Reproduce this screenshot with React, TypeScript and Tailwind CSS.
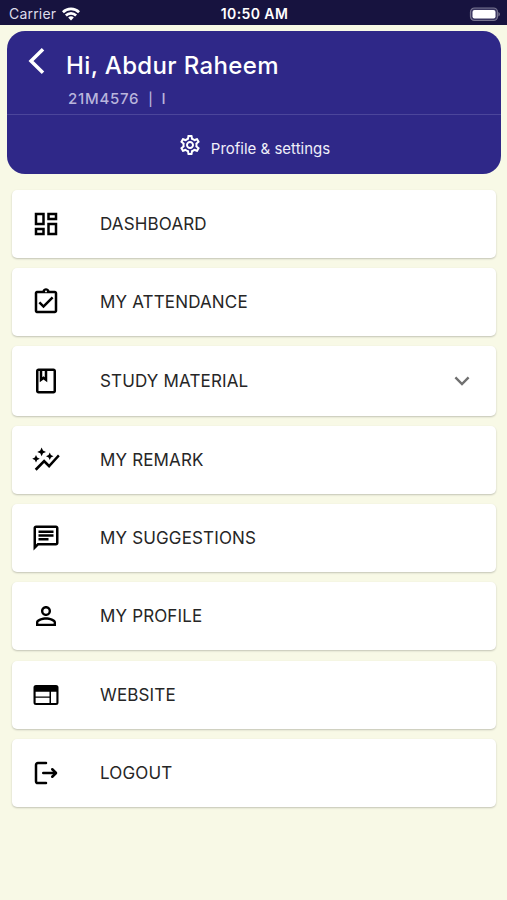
import type { ReactNode } from 'react';
import {
  MdOutlineAssignmentTurnedIn,
  MdOutlineAutoGraph,
  MdOutlineChat,
  MdOutlineClass,
  MdOutlineDashboard,
  MdOutlineSettings,
  MdPersonOutline,
} from 'react-icons/md';

interface MenuItem {
  label: string;
  icon: ReactNode;
  expandable?: boolean;
}

const ICON_SIZE = 30;

function WebsiteIcon() {
  return (
    <svg width={ICON_SIZE} height={ICON_SIZE} viewBox="0 0 24 24" fill="currentColor">
      <path
        fillRule="evenodd"
        d="M4 4h16a2 2 0 0 1 2 2v12a2 2 0 0 1-2 2H4a2 2 0 0 1-2-2V6a2 2 0 0 1 2-2zM3.7 9.3v3.8h11.1V9.3zM3.7 14.2v4.1h11.1v-4.1zM16 9.3v9h4.3v-9z"
      />
    </svg>
  );
}

function LogoutIcon() {
  return (
    <svg width={ICON_SIZE} height={ICON_SIZE} viewBox="0 0 24 24" fill="none" stroke="currentColor" strokeWidth={2}>
      <path d="M12 4H5.5A1.5 1.5 0 0 0 4 5.5v13A1.5 1.5 0 0 0 5.5 20H12" strokeLinecap="round" />
      <path d="M9.8 12h10" strokeLinecap="round" />
      <path d="M17 9l3 3-3 3" strokeLinecap="round" strokeLinejoin="round" />
    </svg>
  );
}

const menuItems: MenuItem[] = [
  { label: 'DASHBOARD', icon: <MdOutlineDashboard size={ICON_SIZE} /> },
  { label: 'MY ATTENDANCE', icon: <MdOutlineAssignmentTurnedIn size={ICON_SIZE} /> },
  { label: 'STUDY MATERIAL', icon: <MdOutlineClass size={ICON_SIZE} />, expandable: true },
  { label: 'MY REMARK', icon: <MdOutlineAutoGraph size={ICON_SIZE} /> },
  { label: 'MY SUGGESTIONS', icon: <MdOutlineChat size={ICON_SIZE} /> },
  { label: 'MY PROFILE', icon: <MdPersonOutline size={ICON_SIZE} /> },
  { label: 'WEBSITE', icon: <WebsiteIcon /> },
  { label: 'LOGOUT', icon: <LogoutIcon /> },
];

function StatusBar() {
  return (
    <div className="grid h-[25px] grid-cols-3 items-center bg-[#17133f] pl-[9px] pr-[7px] pt-[3px] text-[14px] leading-none text-white">
      <div className="flex items-center gap-[6px] text-[#dddcea]">
        <span className="tracking-[0.2px]">Carrier</span>
        <svg width="18" height="14" viewBox="0 0 19 14" fill="none" stroke="#fff" strokeWidth="2.8">
          <path d="M1 5.1a12 12 0 0 1 17 0" />
          <path d="M4.1 8.6a7.6 7.6 0 0 1 10.8 0" />
          <path d="M9.5 13.8l-3-3a4.3 4.3 0 0 1 6 0z" fill="#fff" stroke="none" />
        </svg>
      </div>
      <span className="whitespace-nowrap text-center text-[14px] font-semibold tracking-[0.4px]">10:50 AM</span>
      <svg className="justify-self-end" width="31" height="15" viewBox="0 0 31 15">
        <rect x="1.5" y="1" width="27" height="12.5" rx="4" fill="#3a3660" stroke="#77748f" strokeWidth="1.2" />
        <rect x="3.5" y="3" width="23" height="8.5" rx="2" fill="#fff" />
        <path d="M29.4 5c2 .8 2 3.7 0 4.5z" fill="#77748f" />
      </svg>
    </div>
  );
}

function ProfileHeader() {
  return (
    <header className="ml-[7px] mr-[6px] mt-[6px] h-[143px] rounded-[18px] bg-[#2f2888] text-white">
      <div className="flex h-[84px] border-b border-[#4c469b] pl-[20px]">
        <button className="mt-[15px] h-[29px] w-[39px] shrink-0" aria-label="Back">
          <svg width="20" height="29" viewBox="0 0 20 29" fill="none" stroke="currentColor" strokeWidth="3.5">
            <path d="M16 3.2 4 15l12 11.8" />
          </svg>
        </button>
        <div className="pt-[20px]">
          <h1 className="whitespace-nowrap text-[24px] font-medium leading-[30px] tracking-[0.36px]">Hi, Abdur Raheem</h1>
          <p className="ml-[2px] mt-[8px] flex items-center text-[15px] font-medium leading-[20px] tracking-[0.75px] text-[#b9b5dc]">
            <span>21M4576</span>
            <span className="ml-[9px] text-[13px]">|</span>
            <span className="ml-[8px]">I</span>
          </p>
        </div>
      </div>
      <button className="flex h-[59px] w-full items-center justify-center gap-[9px]">
        <MdOutlineSettings size={24} className="mt-px" />
        <span className="mt-[7px] text-[15px] leading-none text-[#f0effa]">Profile &amp; settings</span>
      </button>
    </header>
  );
}

function MenuRow({ item }: { item: MenuItem }) {
  return (
    <li
      className={`flex items-center rounded-[5px] bg-white pl-[19px] pr-[26px] shadow-[0_1px_2px_rgba(0,0,0,0.22)] ${
        item.expandable ? 'h-[70px]' : 'h-[68px]'
      }`}
    >
      <span className="text-black">{item.icon}</span>
      <span className="ml-[39px] grow pt-px text-[17px] leading-none tracking-[0.15px] text-[#262626]">{item.label}</span>
      {item.expandable && (
        <svg width="16" height="10" viewBox="0 0 16 10" fill="none" stroke="#707070" strokeWidth="2.4">
          <path d="M1.4 1.4 8 8l6.6-6.6" />
        </svg>
      )}
    </li>
  );
}

export default function App() {
  return (
    <div className="h-[900px] w-[507px] overflow-hidden bg-[#f8f9e6] font-['Inter',sans-serif]">
      <StatusBar />
      <ProfileHeader />
      <ul className="ml-[12px] mr-[11px] mt-[15.5px] flex flex-col gap-[10.2px]">
        {menuItems.map((item) => (
          <MenuRow key={item.label} item={item} />
        ))}
      </ul>
    </div>
  );
}
